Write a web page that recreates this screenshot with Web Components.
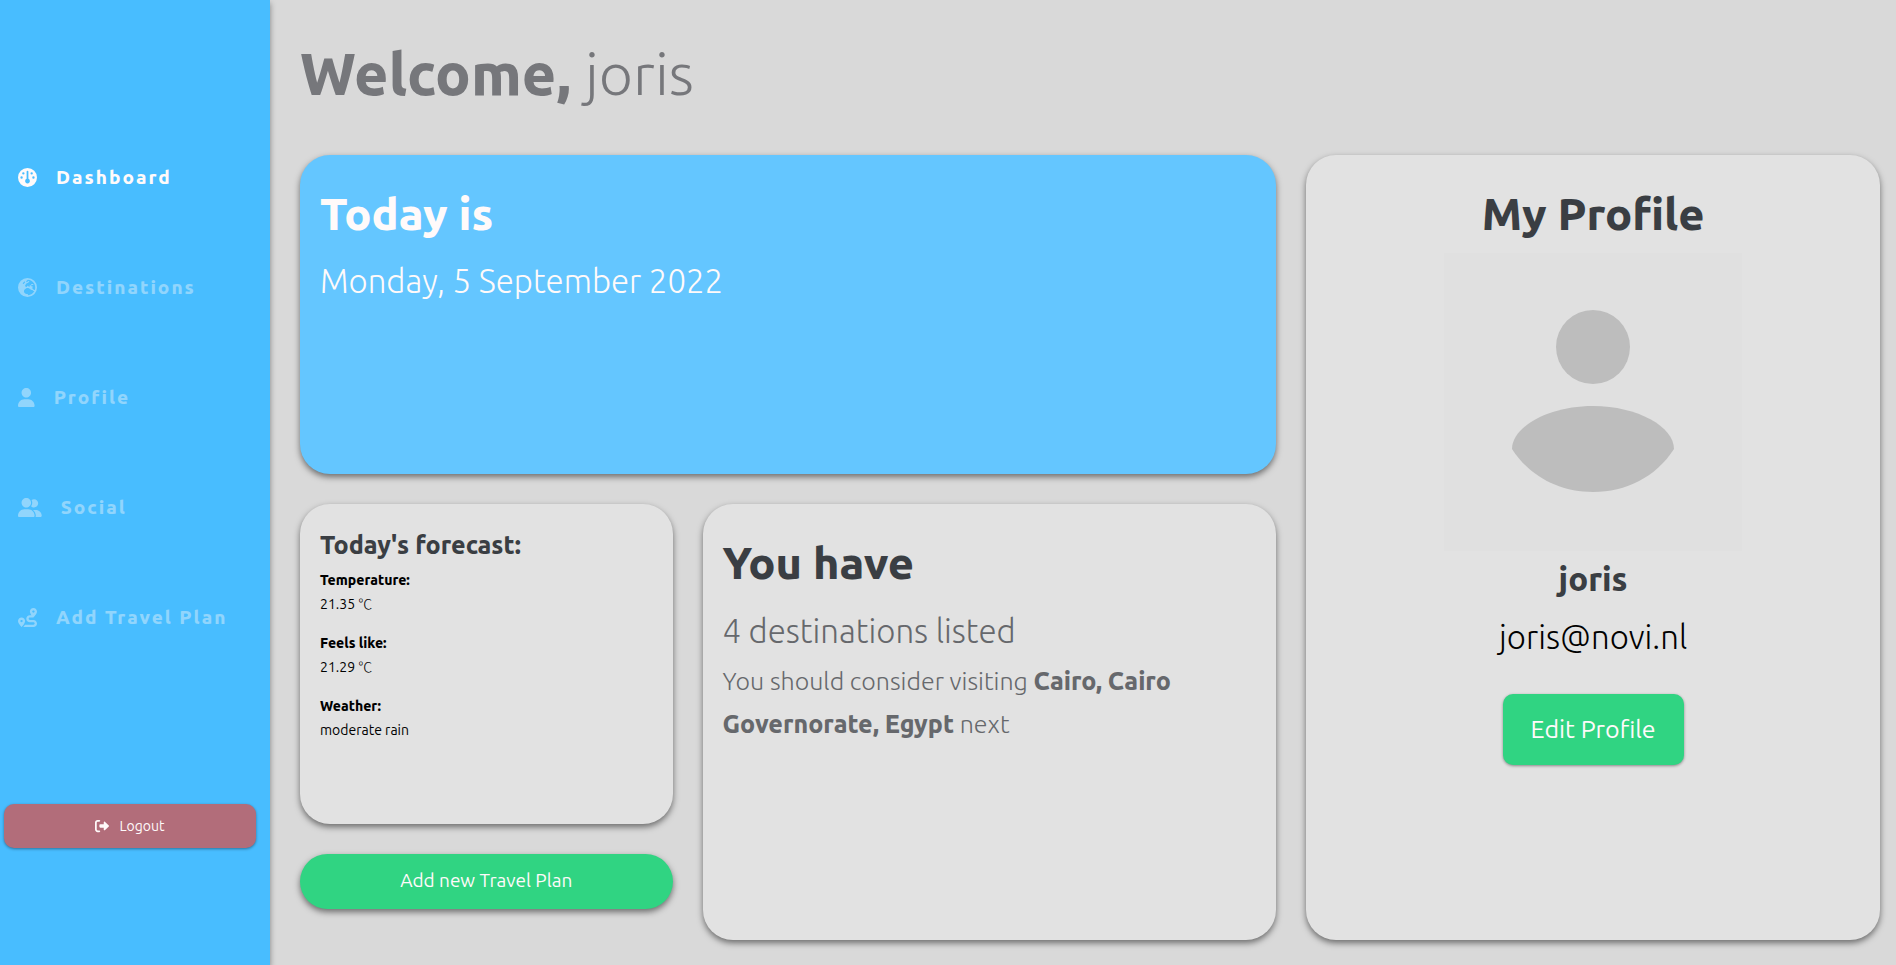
<!DOCTYPE html>
<html lang="en">
<head>
<meta charset="utf-8">
<title>Travel dashboard</title>
<style>
  body { margin: 0; background: #d9d9d9; color: #000; font-family: Ubuntu, "Noto Sans", sans-serif; }
</style>
</head>
<body>
<travel-app></travel-app>

<script>
const ICONS = {
  gauge: [512, '<path fill-rule="evenodd" d="M256 0a256 256 0 1 1 0 512a256 256 0 1 1 0-512zM256 72c-13 0-24 11-24 24v196a64 64 0 1 0 48 0V96c0-13-11-24-24-24zM144 112a32 32 0 1 0 0 64a32 32 0 1 0 0-64zM368 112a32 32 0 1 0 0 64a32 32 0 1 0 0-64zM96 224a32 32 0 1 0 0 64a32 32 0 1 0 0-64zM416 224a32 32 0 1 0 0 64a32 32 0 1 0 0-64z"/>'],
  earth: [512, '<path fill-rule="evenodd" d="M266.3 48.3L232.5 73.6c-5.4 4-8.5 10.4-8.5 17.1v9.1c0 6.8 5.5 12.3 12.3 12.3c2.4 0 4.8-.7 6.8-2.1l41.8-27.9c2-1.3 4.4-2.1 6.8-2.1h1c6.2 0 11.3 5.1 11.3 11.3c0 3-1.2 5.9-3.3 8l-19.9 19.9c-5.8 5.8-12.9 10.2-20.7 12.8l-26.5 8.8c-5.8 1.9-9.6 7.3-9.6 13.4c0 3.7-1.5 7.3-4.1 10l-17.9 17.9c-6.4 6.4-9.9 15-9.9 24v4.3c0 16.4 13.6 29.7 29.9 29.7c11 0 21.2-6.2 26.1-16l4-8.1c2.4-4.8 7.4-7.9 12.8-7.9c4.5 0 8.7 2.1 11.4 5.7l16.3 21.7c2.1 2.9 5.5 4.5 9.1 4.5c8.4 0 13.9-8.9 10.1-16.4l-1.1-2.3c-3.5-7 0-15.5 7.5-18l21.2-7.1c7.6-2.5 12.7-9.6 12.7-17.6c0-10.3 8.3-18.6 18.6-18.6H400c8.8 0 16 7.2 16 16s-7.2 16-16 16H379.3c-7.2 0-14.2 2.9-19.3 8l-4.7 4.7c-2.1 2.1-3.3 5-3.3 8c0 6.2 5.1 11.3 11.3 11.3h11.3c6 0 11.8 2.4 16 6.6l6.5 6.5c1.8 1.8 2.8 4.3 2.8 6.8s-1 5-2.8 6.8l-7.5 7.5C386 262 384 266.9 384 272s2 10 5.7 13.7L408 304c10.2 10.2 24.1 16 38.6 16H454c6.5-20.2 10-41.7 10-64c0-111.4-87.6-202.4-197.7-207.7zm172 307.9c-3.7-2.6-8.2-4.1-13-4.1c-6 0-11.8-2.4-16-6.6L396 332c-7.7-7.7-18-12-28.9-12c-9.7 0-19.2-3.5-26.6-9.8L314 287.4c-11.6-9.9-26.4-15.4-41.7-15.4H251.4c-12.6 0-25 3.7-35.5 10.7L188.5 301c-17.8 11.9-28.5 31.9-28.5 53.3v3.2c0 17 6.7 33.3 18.7 45.3l16 16c8.5 8.5 20 13.3 32 13.3H248c13.3 0 24 10.7 24 24c0 2.5 .4 5 1.1 7.3c71.3-5.8 132.5-47.4 165.2-107.2zM0 256a256 256 0 1 1 512 0A256 256 0 1 1 0 256zM187.3 100.7c-6.2-6.2-16.4-6.2-22.6 0l-32 32c-6.2 6.2-6.2 16.4 0 22.6s16.4 6.2 22.6 0l32-32c6.2-6.2 6.2-16.4 0-22.6z"/>'],
  user: [448, '<path d="M224 256c70.7 0 128-57.31 128-128s-57.3-128-128-128C153.3 0 96 57.31 96 128S153.3 256 224 256zM274.7 304H173.3C77.61 304 0 381.6 0 477.3c0 19.14 15.52 34.67 34.66 34.67h378.7C432.5 512 448 496.5 448 477.3C448 381.6 370.4 304 274.7 304z"/>'],
  users: [640, '<path d="M224 256c70.7 0 128-57.31 128-128S294.7 0 224 0C153.3 0 96 57.31 96 128S153.3 256 224 256zM274.7 304H173.3c-95.73 0-173.3 77.6-173.3 173.3C0 496.5 15.52 512 34.66 512H413.3C432.5 512 448 496.5 448 477.3C448 381.6 370.4 304 274.7 304zM479.1 320h-73.85C451.2 357.7 480 414.1 480 477.3C480 490.1 476.2 501.9 470 512h138C625.7 512 640 497.6 640 479.1C640 391.6 568.4 320 479.1 320zM432 256C493.9 256 544 205.9 544 144S493.9 32 432 32c-25.11 0-48.04 8.555-66.72 22.51C376.8 76.63 384 101.4 384 128c0 35.52-11.93 68.14-31.59 94.71C372.7 243.2 400.8 256 432 256z"/>'],
  route: [512, '<path fill-rule="evenodd" d="M320 256C302.3 256 288 270.3 288 288C288 305.7 302.3 320 320 320H416C469 320 512 362.1 512 416C512 469 469 512 416 512H139.6C148.3 502.1 158.9 489.4 169.6 475.2C175.9 466.8 182.4 457.6 188.6 448H416C433.7 448 448 433.7 448 416C448 398.3 433.7 384 416 384H320C266.1 384 223.1 341 223.1 288C223.1 234.1 266.1 192 320 192H362.1C340.2 161.5 320 125.4 320 96C320 42.98 362.1 0 416 0C469 0 512 42.98 512 96C512 160 416 256 416 256H320zM416 128C433.7 128 448 113.7 448 96C448 78.33 433.7 64 416 64C398.3 64 384 78.33 384 96C384 113.7 398.3 128 416 128zM118.3 487.8C113.4 493.4 109.5 497.7 105.2 502.4C99.5 508.5 96 512 96 512C96 512 0 416 0 352C0 298.1 42.98 255.1 96 255.1C149 255.1 192 298.1 192 352C192 381.4 171.8 417.5 149.9 448C138.1 463.2 127.7 476.9 118.3 487.8zM95.1 384C113.7 384 127.1 369.7 127.1 352C127.1 334.3 113.7 320 95.1 320C78.33 320 63.1 334.3 63.1 352C63.1 369.7 78.33 384 95.1 384z"/>'],
  logout: [512, '<path d="M96 480h64C177.7 480 192 465.7 192 448S177.7 416 160 416H96c-17.67 0-32-14.33-32-32V128c0-17.67 14.33-32 32-32h64C177.7 96 192 81.67 192 64S177.7 32 160 32H96C42.98 32 0 74.98 0 128v256C0 437 42.98 480 96 480zM504.8 238.5l-144.1-136c-6.975-6.578-17.2-8.375-26-4.594c-8.803 3.797-14.51 12.47-14.51 22.05l-.0918 72l-128-.001c-17.69 0-32.02 14.33-32.02 32v64c0 17.67 14.34 32 32.02 32l128 .001l.0918 71.1c0 9.578 5.707 18.25 14.51 22.05c8.803 3.781 19.03 1.984 26-4.594l144.1-136C514.4 264.4 514.4 247.6 504.8 238.5z"/>']
};

const define = (name, html, setup) => customElements.define(name, class extends HTMLElement {
  connectedCallback() {
    if (this.shadowRoot) return;
    const template = document.createElement('template');
    template.innerHTML = html;
    this.attachShadow({ mode: 'open' }).append(template.content.cloneNode(true));
    if (setup) setup(this, this.shadowRoot);
  }
});

define('app-icon', `
  <style>
    :host { display: inline-flex; flex: none; }
    svg { display: block; height: 1em; fill: currentColor; }
  </style>
  <svg aria-hidden="true"></svg>`,
  (host, root) => {
    const [width, shape] = ICONS[host.getAttribute('name')];
    const svg = root.querySelector('svg');
    svg.setAttribute('viewBox', '0 0 ' + width + ' 512');
    svg.innerHTML = shape;
  });

define('nav-link', `
  <style>
    :host { display: block; }
    a { display: flex; align-items: center; gap: 19px; height: 110px; padding-left: 18px; color: snow; opacity: .4;
        font-size: 19px; font-weight: 800; letter-spacing: 2px; line-height: 24px; text-decoration: none; }
    :host([active]) a, a:hover { opacity: 1; }
  </style>
  <a><slot></slot></a>`,
  (host, root) => {
    const icon = document.createElement('app-icon');
    icon.setAttribute('name', host.getAttribute('icon'));
    const link = root.querySelector('a');
    link.href = '#' + host.getAttribute('icon');
    link.prepend(icon);
  });

define('app-button', `
  <style>
    :host { display: block; }
    button { display: flex; align-items: center; justify-content: center; gap: 10px; width: 100%; border: 0; margin: 0;
      height: 44px; border-radius: 10px; background: #b26d7a; color: snow; font: inherit; font-size: 14px; line-height: 20px;
      cursor: pointer; box-shadow: 0 1px 3px rgba(0,0,0,.4); }
    :host([kind="wide"]) button { height: 55px; padding-bottom: 3px; border-radius: 30px; background: #30d482; font-size: 19px;
      box-shadow: 0 3px 6px rgba(0,0,0,.5); }
    :host([kind="large"]) button { height: 71px; padding: 0 28px 2px; background: #30d482; font-size: 25px; }
  </style>
  <button type="button"><slot></slot></button>`);

define('side-bar', `
  <style>
    :host { display: flex; flex-direction: column; box-sizing: border-box; width: 270px; flex: none; padding-top: 122px;
      background: #48bdff; box-shadow: 0 3px 6px rgba(0,0,0,.4); }
    app-button { margin: 132px 14px 24px 4px; }
    app-icon { font-size: 14px; }
  </style>
  <nav aria-label="Main">
    <nav-link icon="gauge" active>Dashboard</nav-link>
    <nav-link icon="earth">Destinations</nav-link>
    <nav-link icon="user">Profile</nav-link>
    <nav-link icon="users">Social</nav-link>
    <nav-link icon="route">Add Travel Plan</nav-link>
  </nav>
  <app-button><app-icon name="logout"></app-icon>Logout</app-button>`);

define('info-card', `
  <style>
    :host { display: block; box-sizing: border-box; min-width: 0; padding: 20px; border-radius: 30px; background: #e2e2e2;
      box-shadow: 0 3px 6px rgba(0,0,0,.5); }
    :host([tone="blue"]) { background: #64c6ff; }
    :host([centered]) { text-align: center; }
  </style>
  <slot></slot>`);

define('date-card', `
  <style>
    :host { display: grid; color: snow; }
    h2, p { margin: 0; }
    h2 { font-size: 45px; font-weight: 800; line-height: 78px; }
    p { font-size: 33px; font-weight: 300; line-height: 56px; }
  </style>
  <info-card tone="blue"><h2>Today is</h2><p>Monday, 5 September 2022</p></info-card>`);

define('forecast-card', `
  <style>
    :host { display: grid; }
    h3, dl, dd { margin: 0; }
    h3 { color: #3a3e43; font-size: 25px; font-weight: 800; line-height: 42px; }
    dl { margin-top: 2px; font-size: 14px; line-height: 24px; }
    dt { font-weight: 800; }
    dd { margin-bottom: 15px; }
    .unit { font-family: "Noto Sans CJK SC", sans-serif; font-weight: 300; line-height: 1; }
  </style>
  <info-card>
    <h3>Today's forecast:</h3>
    <dl>
      <dt>Temperature:</dt><dd>21.35 <span class="unit">℃</span></dd>
      <dt>Feels like:</dt><dd>21.29 <span class="unit">℃</span></dd>
      <dt>Weather:</dt><dd>moderate rain</dd>
    </dl>
  </info-card>`);

define('destinations-card', `
  <style>
    :host { display: grid; color: #66686c; }
    h2, p { margin: 0; font-weight: 300; }
    h2 { color: #3a3e43; font-size: 45px; font-weight: 800; line-height: 78px; }
    .count { font-size: 33px; line-height: 58px; }
    .tip { font-size: 25px; line-height: 43px; }
    strong { font-weight: 800; }
  </style>
  <info-card>
    <h2>You have</h2>
    <p class="count">4 destinations listed</p>
    <p class="tip">You should consider visiting <strong>Cairo, Cairo Governorate, Egypt</strong> next</p>
  </info-card>`);

define('profile-card', `
  <style>
    :host { display: grid; color: #3a3e43; }
    h2, h3, p { margin: 0; }
    h2, h3 { font-weight: 800; }
    h2 { font-size: 45px; line-height: 78px; }
    h3 { font-size: 33px; line-height: 56px; }
    p { color: #000; font-size: 33px; font-weight: 300; line-height: 60px; }
    svg { display: block; width: 298px; max-width: 100%; margin: 0 auto; background: #e0e0e0; fill: #bdbdbd; }
    app-button { width: max-content; margin: 27px auto 0; }
  </style>
  <info-card centered>
    <h2>My Profile</h2>
    <svg viewBox="0 0 298 298" role="img" aria-label="Avatar">
      <circle cx="149" cy="94" r="37"/>
      <path d="M68 196C68 174 104 153 149 153S230 174 230 196C212 224 182 239 149 239S86 224 68 196z"/>
    </svg>
    <h3>joris</h3>
    <p>joris@novi.nl</p>
    <app-button kind="large">Edit Profile</app-button>
  </info-card>`);

define('travel-app', `
  <style>
    :host { display: flex; min-height: 100vh; }
    main { display: flex; flex-direction: column; flex: 1; min-width: 0; padding: 0 16px 25px 30px; }
    h1 { margin: 0; padding: 39px 0 48px; color: #76777b; font-size: 59px; font-weight: 800; line-height: 68px; }
    h1 span { font-weight: 300; }
    .board { display: grid; flex: 1; grid-template-columns: repeat(8, minmax(0, 1fr)); grid-template-rows: repeat(7, 1fr); gap: 30px; }
    date-card { grid-area: 1 / 1 / span 3 / span 5; }
    forecast-card { grid-area: 4 / 1 / span 3 / span 2; }
    app-button { grid-area: 7 / 1 / span 1 / span 2; }
    destinations-card { grid-area: 4 / 3 / span 4 / span 3; }
    profile-card { grid-area: 1 / 6 / span 7 / span 3; }
  </style>
  <side-bar></side-bar>
  <main>
    <h1>Welcome, <span>joris</span></h1>
    <div class="board">
      <date-card></date-card>
      <profile-card></profile-card>
      <forecast-card></forecast-card>
      <destinations-card></destinations-card>
      <app-button kind="wide">Add new Travel Plan</app-button>
    </div>
  </main>`);
</script>
</body>
</html>
